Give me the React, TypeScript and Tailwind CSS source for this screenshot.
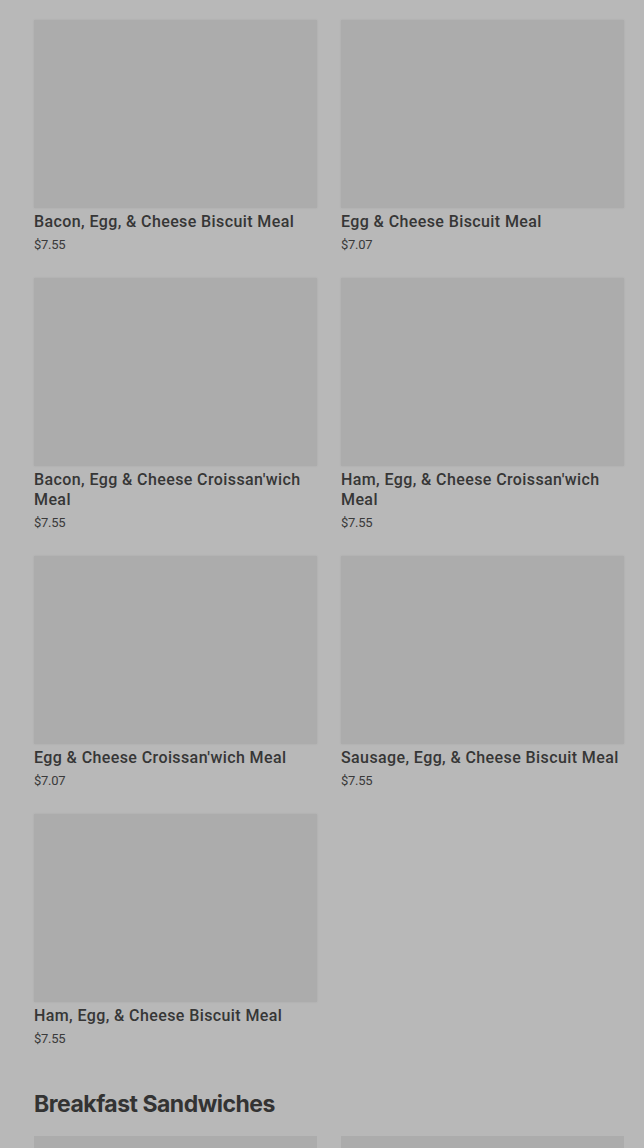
const items = [
  { name: 'Bacon, Egg, & Cheese Biscuit Meal', price: '$7.55' },
  { name: 'Egg & Cheese Biscuit Meal', price: '$7.07' },
  { name: "Bacon, Egg & Cheese Croissan'wich Meal", price: '$7.55' },
  { name: "Ham, Egg, & Cheese Croissan'wich Meal", price: '$7.55' },
  { name: "Egg & Cheese Croissan'wich Meal", price: '$7.07' },
  { name: 'Sausage, Egg, & Cheese Biscuit Meal', price: '$7.55' },
  { name: 'Ham, Egg, & Cheese Biscuit Meal', price: '$7.55' },
];

const ItemCard = ({ name, price }: { name: string; price: string }) => (
  <div className="flex flex-col">
    <div className="h-[188px] w-full bg-[#acacac] shadow-[0_0_2px_rgba(0,0,0,0.08)]" />
    <div className="mt-1 text-[16px] leading-5 font-medium text-[#363636] tracking-[0.4px]">{name}</div>
    <div className="mt-[5px] text-[13px] leading-4 text-[#3a3a3a] tracking-[-0.3px]">{price}</div>
  </div>
);

export default function App() {
  return (
    <div
      className="min-h-[1148px] bg-[#b8b8b8] pl-[34px] pr-[20px] pt-5 overflow-hidden"
      style={{ fontFamily: 'Roboto, "Liberation Sans", sans-serif' }}
    >
      <div className="grid grid-cols-2 gap-x-6 gap-y-[25px]">
        {items.map((it) => (
          <ItemCard key={it.name} name={it.name} price={it.price} />
        ))}
      </div>
      <h2
        className="mt-[43px] text-[23px] leading-7 font-bold text-[#333333] tracking-[-0.5px]"
        style={{ fontFamily: 'Inter, "Liberation Sans", sans-serif' }}
      >
        Breakfast Sandwiches
      </h2>
      <div className="mt-[18px] grid grid-cols-2 gap-x-6">
        <div className="h-[188px] bg-[#acacac]" />
        <div className="h-[188px] bg-[#acacac]" />
      </div>
    </div>
  );
}
